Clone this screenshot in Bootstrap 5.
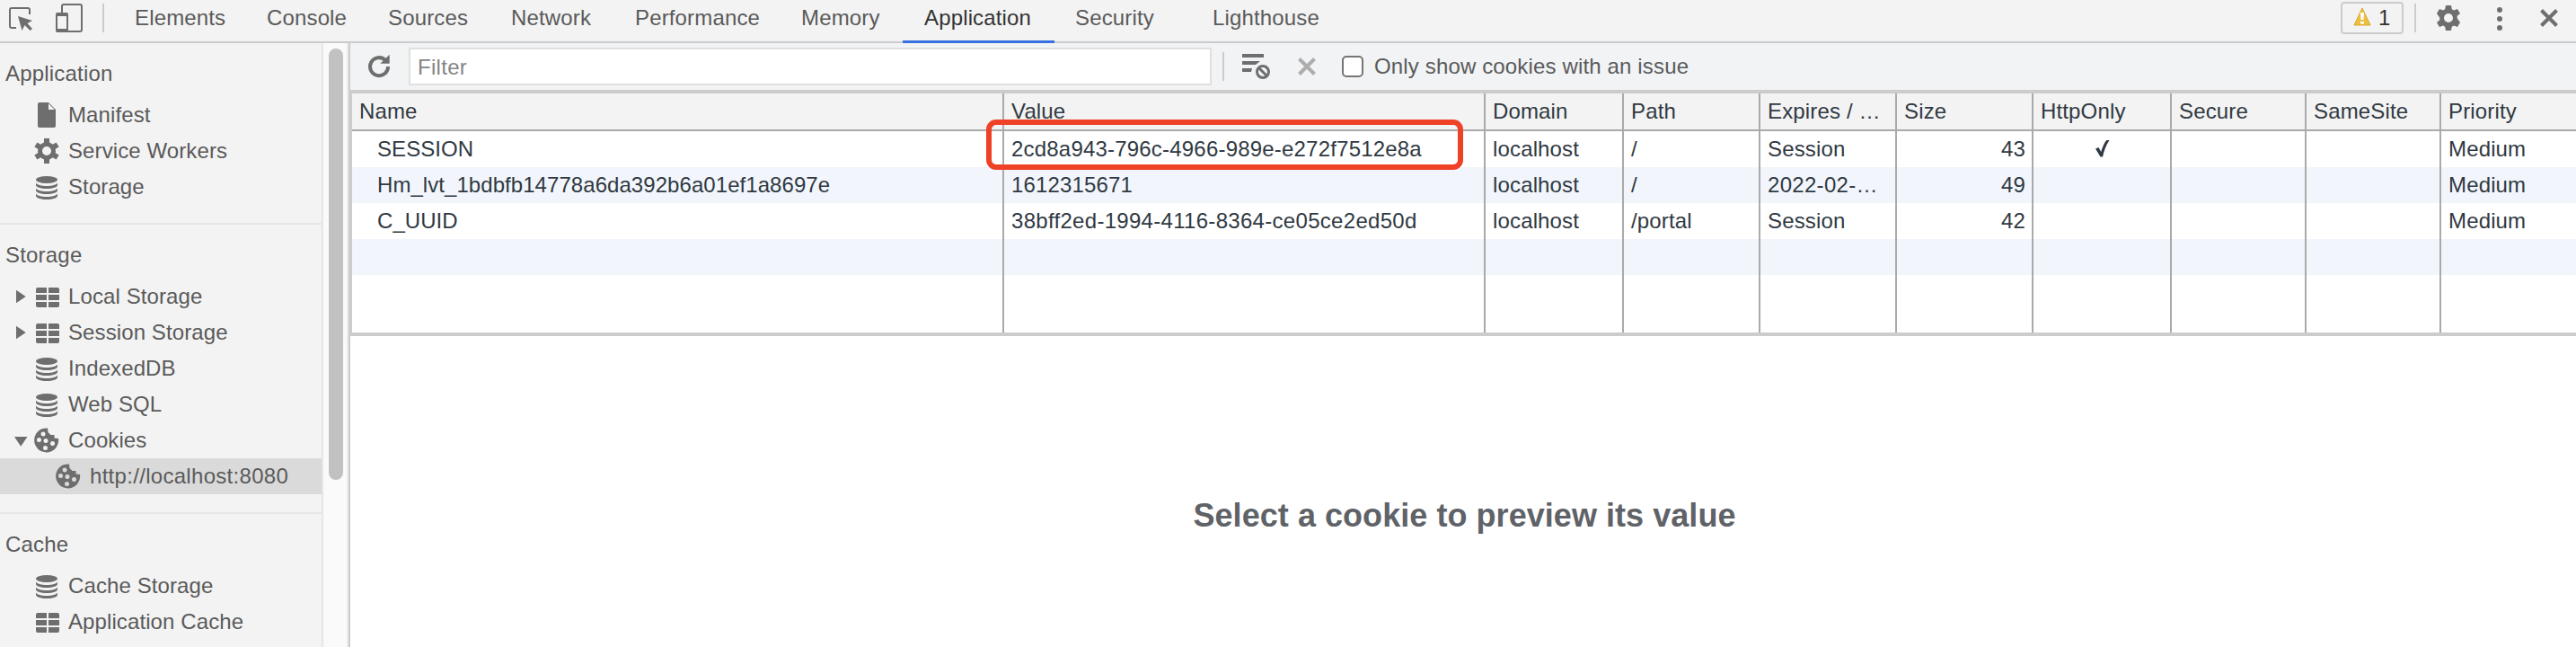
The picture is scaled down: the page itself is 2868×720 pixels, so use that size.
<!DOCTYPE html>
<html lang="en">

<head>
    <meta charset="UTF-8">
    <meta name="viewport" content="width=device-width, initial-scale=1.0">
    <title>DevTools - Application</title>
    <link href="https://cdn.jsdelivr.net/npm/bootstrap@5.3.0/dist/css/bootstrap.min.css" rel="stylesheet">
    <style>
        body {
            font-family: "Liberation Sans", Arial, sans-serif;
            font-size: 24px;
            line-height: 40px;
            letter-spacing: .15px;
            color: #5a5a5a;
        }

        svg { display: block; flex: none; fill: #6e6e6e; }

        /* top bar */
        .topbar { height: 48px; background: #f3f3f3; border-bottom: 2px solid #ccc; }
        .topbar-tools { width: 127px; padding: 4px 11px 0 10px; }
        .vline { width: 2px; height: 32px; background: #ccc; flex: none; }
        .tabs {
            display: grid;
            grid-template-columns: 147px 135px 137px 138px 185px 137px 168px 153px 160px;
            height: 48px;
        }
        .tabs a { padding-left: 23px; color: #5a5a5a; text-decoration: none; }
        .tabs a.active { color: #333; margin-left: -1px; padding-left: 24px; border-bottom: 3px solid #3871e0; }
        .warn-btn {
            width: 70px;
            height: 36px;
            margin: 2px 12px 0 0;
            padding: 0 0 0 12px;
            border: 2px solid #ccc;
            border-radius: 4px;
            line-height: 32px;
            color: #333;
        }
        .icon-settings { margin: 6px 0 0 22px; }
        .icon-more { margin: 8px 0 0 40px; }
        .icon-close { margin: 10px 20px 0 42px; }
        .cross { stroke: #6e6e6e; stroke-width: 4; }
        .outline { fill: none; stroke: #6e6e6e; stroke-width: 2; }

        /* sidebar */
        .sidebar { width: 360px; background: #f3f3f3; border-right: 2px solid #e6e6e6; }
        .sidebar section { padding-bottom: 20px; border-bottom: 2px solid #e6e6e6; }
        .sidebar section:last-child { border: 0; }
        .sidebar h2 { height: 60px; padding: 14px 0 0 6px; font-size: 24px; line-height: 40px; font-weight: 400; margin: 0; letter-spacing: .2px; }
        .tree-item { display: flex; align-items: center; height: 40px; padding-left: 38px; letter-spacing: .1px; }
        .tree-item svg { width: 28px; height: 28px; margin-right: 10px; }
        .tree-item svg.arrow { width: 18px; height: 16px; margin: 0 4px 0 -22px; }
        .tree-item.child { padding-left: 62px; letter-spacing: .3px; }
        .tree-item.selected { background: #dadada; }
        .scroll-track { width: 28px; background: #fafafa; border-right: 2px solid #ebebeb; padding: 6px 0 0 6px; }
        .scroll-thumb { width: 16px; height: 480px; border-radius: 8px; background: #c1c1c1; }

        /* main pane */
        .main-pane { border-left: 2px solid #ccc; background: #fff; }
        .toolbar { height: 52px; background: #f1f3f5; padding-left: 17px; }
        .filter-box { width: 894px; height: 42px; margin: 0 12px 0 20px; padding: 1px 8px 0; border: 2px solid #e0e0e0; font-size: 24px; letter-spacing: .3px; color: #333; }
        .filter-box::placeholder { color: #858585; opacity: 1; }
        .icon-clear-filtered { margin-left: 20px; }
        .icon-delete { margin: 0 29px 0 30px; stroke: #adadad; }
        .check-box { width: 24px; height: 24px; border: 2px solid #757575; border-radius: 5px; background: #fff; appearance: none; margin: 0; }

        .cookie-grid {
            width: 2478px;
            height: 274px;
            border: solid #ccc;
            border-width: 4px 0 4px 2px;
            color: #303942;
        }
        .cookie-row {
            display: grid;
            grid-template-columns: 726px 536px 154px 152px 152px 152px 154px 150px 150px 1fr;
            height: 40px;
        }
        .cookie-row > div { padding: 0 7px 0 8px; border-right: 2px solid #aaa; white-space: nowrap; }
        .cookie-row > div:last-child { border-right: 0; }
        .cookie-row:not(.head) > div:first-child { padding-left: 28px; letter-spacing: .06px; }
        .cookie-row.head { height: 42px; background: #f3f3f3; border-bottom: 2px solid #aaa; }
        .cookie-row.odd { background: #f2f6fc; }
        .cookie-row.filler { height: 64px; }
        .session-id { letter-spacing: .2px; }
        .uuid { letter-spacing: .3px; }
        .tick { fill: #303942; }
        .highlight { left: 708px; top: 85px; width: 531px; height: 56px; border: 6px solid #ee4126; border-radius: 11px; }
        .preview { padding: 180px 0 0 3px; font-size: 36px; font-weight: 700; color: #5f6368; letter-spacing: .05px; }
    </style>
</head>

<body class="vh-100 overflow-hidden d-flex flex-column">
    <!-- shared icons -->
    <svg width="0" height="0" class="position-absolute">
        <symbol id="i-db" viewBox="0 0 28 28">
            <ellipse cx="14" cy="6" rx="12" ry="4"/>
            <path d="M2 9.500c1 2.300 6 3.500 12 3.500s11-1.200 12-3.500V12c0 2-5 4-12 4S2 14 2 12z"/>
            <path d="M2 15.500c1 2.300 6 3.500 12 3.500s11-1.200 12-3.500V18c0 2-5 4-12 4S2 20 2 18z"/>
            <path d="M2 21.500c1 2.300 6 3.500 12 3.500s11-1.200 12-3.500V24c0 2-5 4-12 4S2 26 2 24z"/>
        </symbol>
        <symbol id="i-table" viewBox="0 0 28 28">
            <path d="M4 4h10v6H2V6a2 2 0 0 1 2-2zM16 4h10a2 2 0 0 1 2 2v4H16zM2 12h12v6H2zM16 12h12v6H16zM2 20h12v6H4a2 2 0 0 1-2-2zM16 20h12v4a2 2 0 0 1-2 2H16z"/>
        </symbol>
        <symbol id="i-cookie" viewBox="0 0 28 28">
            <path fill-rule="evenodd" d="M15 .5A13.500 13.500 0 1 0 27 12L22.500 11.500V8H18.500L15.500 5zM10 4.500a2.500 2.500 0 1 1 0 5 2.500 2.500 0 0 1 0-5zM5.500 11a2.500 2.500 0 1 1 0 5 2.500 2.500 0 0 1 0-5zM13 12a2.500 2.500 0 1 1 0 5 2.500 2.500 0 0 1 0-5zM20.500 15a2.500 2.500 0 1 1 0 5 2.500 2.500 0 0 1 0-5zM12.500 20a2.500 2.500 0 1 1 0 5 2.500 2.500 0 0 1 0-5z"/>
        </symbol>
        <symbol id="i-settings" viewBox="0 0 28 28">
            <path fill-rule="evenodd" d="M11 0h6l.8 4.200 2.200 1.300 4-1.600 3 5.200-3.300 2.700v2.400L27 18.900l-3 5.200-4-1.600-2.200 1.300L17 28h-6l-.8-4.200L8 22.500l-4 1.600-3-5.200 3.300-2.700v-2.400L1 9.100l3-5.200 4 1.600 2.200-1.300zM14 9a5 5 0 1 0 0 10 5 5 0 0 0 0-10z"/>
        </symbol>
        <symbol id="i-worker" viewBox="0 0 28 28">
            <circle cx="14" cy="14" r="7.500" fill="none" stroke="#6e6e6e" stroke-width="5"/>
            <path d="M11 0h6v6h-6zM11 22h6v6h-6z"/>
            <path d="M11 0h6v6h-6zM11 22h6v6h-6z" transform="rotate(60 14 14)"/>
            <path d="M11 0h6v6h-6zM11 22h6v6h-6z" transform="rotate(120 14 14)"/>
        </symbol>
        <symbol id="i-right" viewBox="0 0 18 16"><path d="M2 .7v14.600L12.700 8z"/></symbol>
        <symbol id="i-down" viewBox="0 0 18 16"><path d="M0 4h14.500L7.200 14.700z"/></symbol>
    </svg>

    <header class="topbar d-flex">
        <div class="topbar-tools d-flex">
            <svg class="outline" width="28" height="32"><path d="M8 27H3a2 2 0 0 1-2-2V7a2 2 0 0 1 2-2h18a2 2 0 0 1 2 2v5"/><path d="M10 14l16 5-5.500 3 5.500 6-2.500 2-6-6-3 6z" fill="#6e6e6e" stroke="none"/></svg>
            <svg class="outline ms-4" width="30" height="32"><path d="M7 11V3a2 2 0 0 1 2-2h18a2 2 0 0 1 2 2v26a2 2 0 0 1-2 2H13"/><rect x="1" y="11" width="12" height="20" rx="1"/><path d="M1 12h12M1 30h12" stroke-width="4"/></svg>
            <div class="vline ms-auto"></div>
        </div>
        <nav class="tabs">
            <a href="#">Elements</a>
            <a href="#">Console</a>
            <a href="#">Sources</a>
            <a href="#">Network</a>
            <a href="#">Performance</a>
            <a href="#">Memory</a>
            <a href="#" class="active">Application</a>
            <a href="#">Security</a>
            <a href="#">Lighthouse</a>
        </nav>
        <div class="d-flex ms-auto">
            <div class="warn-btn d-flex">
                <svg class="mt-1" width="20" height="21"><path d="M10 1L19 20H1z" fill="#eebf41" stroke="#d9a62c" stroke-linejoin="round"/><path d="M8 6h4l-.5 8h-3zM8 16h4v2.500H8z" fill="#fff"/></svg>
                <span class="ms-2">1</span>
            </div>
            <div class="vline mt-1"></div>
            <svg class="icon-settings" width="28" height="28"><use href="#i-settings"/></svg>
            <svg class="icon-more" width="6" height="26"><circle cx="3" cy="3" r="3"/><circle cx="3" cy="13" r="3"/><circle cx="3" cy="23" r="3"/></svg>
            <svg class="icon-close cross" width="20" height="20"><path d="M1.500 1.500l17 17M18.500 1.500l-17 17"/></svg>
        </div>
    </header>

    <div class="d-flex flex-grow-1 overflow-hidden">
        <aside class="sidebar flex-shrink-0">
            <section>
                <h2>Application</h2>
                <div class="tree-item"><svg><path d="M6 0h10l8 8v18a2 2 0 0 1-2 2H6a2 2 0 0 1-2-2V2a2 2 0 0 1 2-2z"/><path d="M16 1.200V8h6.800z" fill="#f3f3f3"/></svg>Manifest</div>
                <div class="tree-item"><svg><use href="#i-worker"/></svg>Service Workers</div>
                <div class="tree-item"><svg><use href="#i-db"/></svg>Storage</div>
            </section>
            <section>
                <h2>Storage</h2>
                <div class="tree-item"><svg class="arrow"><use href="#i-right"/></svg><svg><use href="#i-table"/></svg>Local Storage</div>
                <div class="tree-item"><svg class="arrow"><use href="#i-right"/></svg><svg><use href="#i-table"/></svg>Session Storage</div>
                <div class="tree-item"><svg><use href="#i-db"/></svg>IndexedDB</div>
                <div class="tree-item"><svg><use href="#i-db"/></svg>Web SQL</div>
                <div class="tree-item"><svg class="arrow"><use href="#i-down"/></svg><svg><use href="#i-cookie"/></svg>Cookies</div>
                <div class="tree-item child selected"><svg><use href="#i-cookie"/></svg>http://localhost:8080</div>
            </section>
            <section>
                <h2>Cache</h2>
                <div class="tree-item"><svg><use href="#i-db"/></svg>Cache Storage</div>
                <div class="tree-item"><svg><use href="#i-table"/></svg>Application Cache</div>
            </section>
        </aside>
        <div class="scroll-track flex-shrink-0">
            <div class="scroll-thumb"></div>
        </div>

        <main class="main-pane flex-grow-1 position-relative">
            <div class="toolbar d-flex align-items-center">
                <svg width="28" height="28"><path d="M22 7A10 10 0 1 0 25 14" fill="none" stroke="#6e6e6e" stroke-width="4"/><path d="M26.700 .7v10H16.300z"/></svg>
                <input class="filter-box" type="text" placeholder="Filter">
                <div class="vline"></div>
                <svg class="icon-clear-filtered" width="32" height="30"><path d="M0 1h24v4H0zM0 9h20l-5 4H0zM0 17h11l-1 4H0z"/><circle cx="23" cy="21" r="6.500" fill="none" stroke="#6e6e6e" stroke-width="3"/><path d="M18.500 16.500l9 9" stroke="#6e6e6e" stroke-width="3"/></svg>
                <svg class="cross icon-delete" width="20" height="20"><path d="M1.500 1.500l17 17M18.500 1.500l-17 17"/></svg>
                <input class="check-box" type="checkbox" id="issues">
                <label class="ms-2 ps-1" for="issues">Only show cookies with an issue</label>
            </div>

            <div class="cookie-grid">
                <div class="cookie-row head">
                    <div>Name</div><div>Value</div><div>Domain</div><div>Path</div><div>Expires / …</div><div>Size</div><div>HttpOnly</div><div>Secure</div><div>SameSite</div><div>Priority</div>
                </div>
                <div class="cookie-row">
                    <div>SESSION</div><div class="session-id">2cd8a943-796c-4966-989e-e272f7512e8a</div><div>localhost</div><div>/</div><div>Session</div><div class="text-end">43</div>
                    <div><svg class="tick mx-auto mt-2" width="16" height="22"><path d="M0 11.500l3.500-1.500 2.700 5C8 9 10.500 3.500 12.500 2H15.500C11.500 8 9.500 14 8 20.500H5.500z"/></svg></div>
                    <div></div><div></div><div>Medium</div>
                </div>
                <div class="cookie-row odd">
                    <div>Hm_lvt_1bdbfb14778a6da392b6a01ef1a8697e</div><div>1612315671</div><div>localhost</div><div>/</div><div class="uuid">2022-02-…</div><div class="text-end">49</div><div></div><div></div><div></div><div>Medium</div>
                </div>
                <div class="cookie-row">
                    <div>C_UUID</div><div class="uuid">38bff2ed-1994-4116-8364-ce05ce2ed50d</div><div>localhost</div><div>/portal</div><div>Session</div><div class="text-end">42</div><div></div><div></div><div></div><div>Medium</div>
                </div>
                <div class="cookie-row odd"><div></div><div></div><div></div><div></div><div></div><div></div><div></div><div></div><div></div><div></div></div>
                <div class="cookie-row filler"><div></div><div></div><div></div><div></div><div></div><div></div><div></div><div></div><div></div><div></div></div>
            </div>
            <div class="highlight position-absolute"></div>

            <div class="preview text-center">Select a cookie to preview its value</div>
        </main>
    </div>

    <script src="https://cdn.jsdelivr.net/npm/bootstrap@5.3.0/dist/js/bootstrap.bundle.min.js"></script>
</body>

</html>
